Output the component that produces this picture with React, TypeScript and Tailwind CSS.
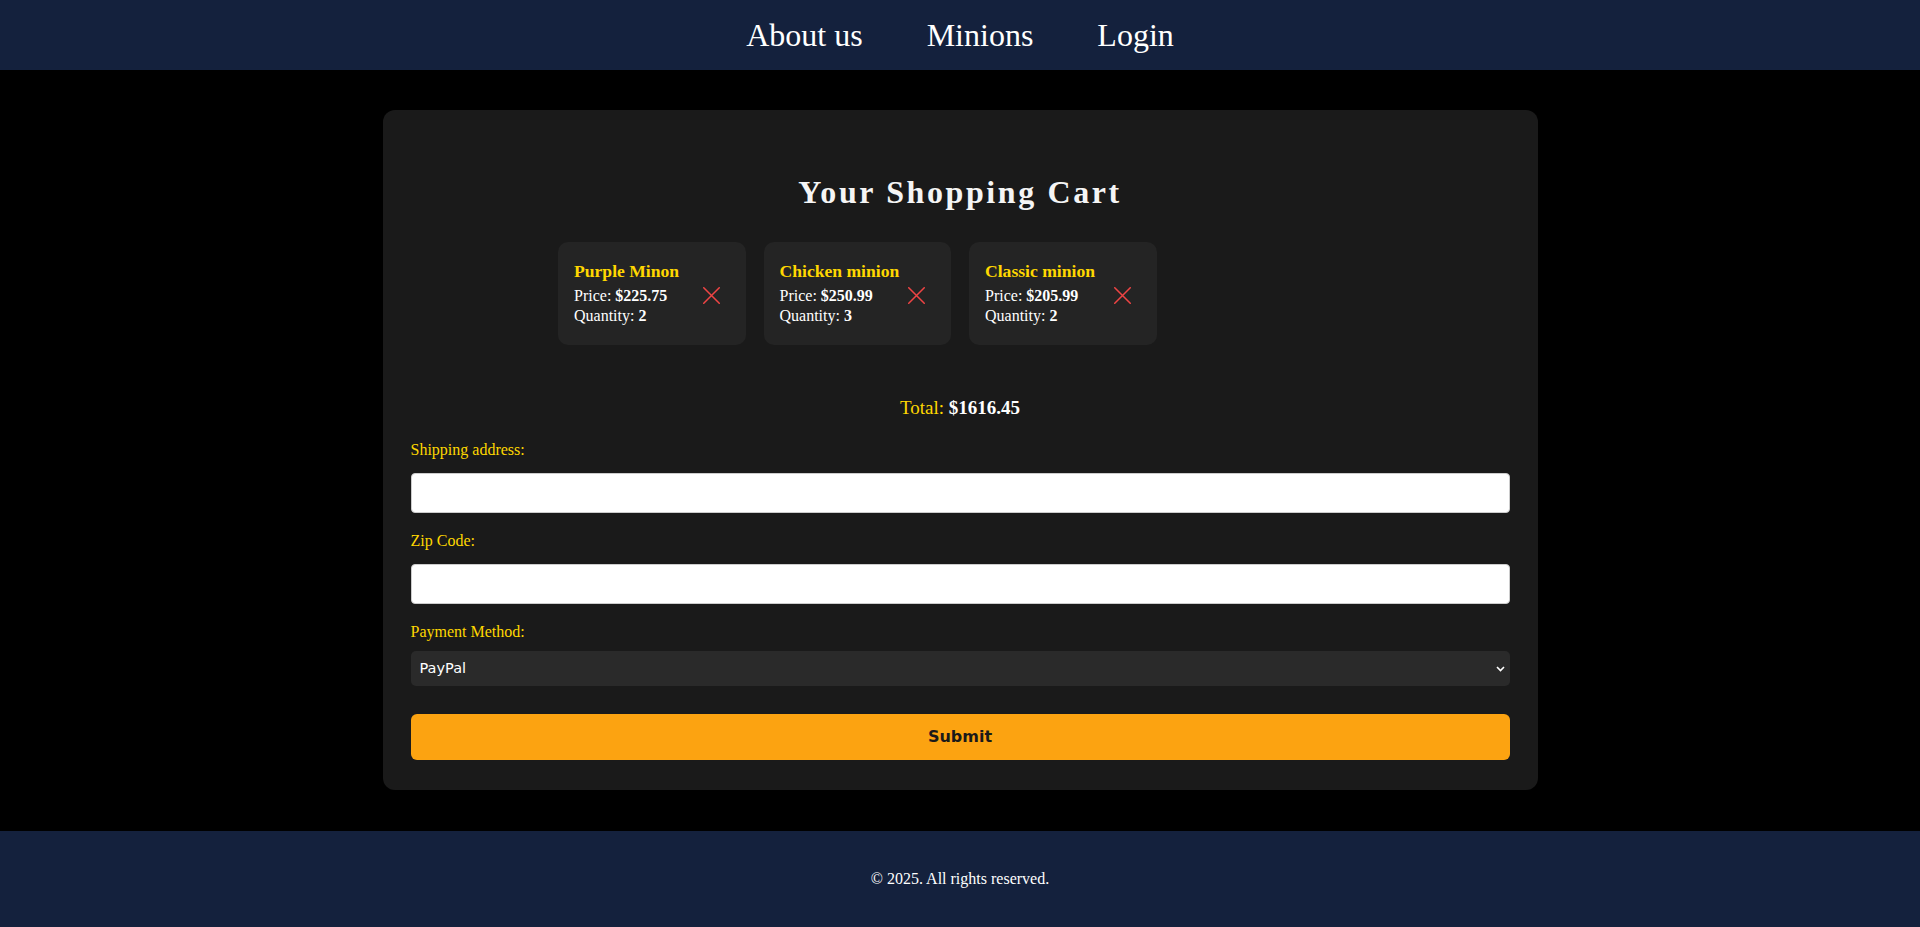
import React from "react";

const items = [
  { name: "Purple Minon", price: "$225.75", qty: 2 },
  { name: "Chicken minion", price: "$250.99", qty: 3 },
  { name: "Classic minion", price: "$205.99", qty: 2 },
];

function XIcon() {
  return (
    <svg width="17" height="17" viewBox="0 0 17 17" fill="none">
      <path d="M0.75 0.75L16.25 16.25M16.25 0.75L0.75 16.25" stroke="#ef4444" strokeWidth="1.5" strokeLinecap="round" />
    </svg>
  );
}

export default function App() {
  return (
    <div className="min-h-screen bg-black flex flex-col font-['Liberation_Serif','Times_New_Roman',serif]">
      <header className="h-[70px] bg-[#14213d] flex items-center justify-center gap-[64px]">
        <a className="text-white text-[32px] leading-[37px]">About us</a>
        <a className="text-white text-[32px] leading-[37px]">Minions</a>
        <a className="text-white text-[32px] leading-[37px]">Login</a>
      </header>

      <main className="flex-1 flex justify-center items-start pt-[40px] pb-[41px]">
        <div className="w-[1155px] bg-[#1a1a1a] rounded-[12px] px-[28px] pt-[64px] pb-[30px]">
          <h2 className="text-center text-[32px] leading-[37px] font-bold tracking-[2.6px] text-[#f5f5f5]">
            Your Shopping Cart
          </h2>

          <div className="mt-[31px] w-[804px] mx-auto grid grid-cols-4 gap-[18px]">
            {items.map((it) => (
              <div key={it.name} className="h-[103px] bg-[#242424] rounded-[10px] flex justify-between items-start pl-4 pr-[26px]">
                <div className="pt-[19px]">
                  <div className="text-[#ffd700] font-bold text-[17.6px] leading-[20px]">{it.name}</div>
                  <div className="mt-[5px] text-white text-[16px] leading-[20px]">
                    Price: <span className="font-bold">{it.price}</span>
                  </div>
                  <div className="text-white text-[16px] leading-[20px]">
                    Quantity: <span className="font-bold">{it.qty}</span>
                  </div>
                </div>
                <button className="self-center mt-[4px] flex">
                  <XIcon />
                </button>
              </div>
            ))}
          </div>

          <div className="mt-[52px] text-center text-[19px] leading-[22px] text-[#ffd700]">
            Total: <span className="font-bold text-white">$1616.45</span>
          </div>

          <div className="mt-[22px]">
            <label className="block text-[16px] leading-[18px] text-[#ffd700]">Shipping address:</label>
            <input className="mt-[14px] block w-full h-[40px] bg-white rounded-[4px] border border-[#cccccc] outline-none" />

            <label className="mt-[19px] block text-[16px] leading-[18px] text-[#ffd700]">Zip Code:</label>
            <input className="mt-[14px] block w-full h-[40px] bg-white rounded-[4px] border border-[#cccccc] outline-none" />

            <label className="mt-[19px] block text-[16px] leading-[18px] text-[#ffd700]">Payment Method:</label>
            <div className="relative mt-[10px]">
              <select className="appearance-none block w-full h-[35px] bg-[#2a2a2a] rounded-[5px] text-white pl-[9px] text-[14.5px] font-['DejaVu_Sans',sans-serif] outline-none">
                <option>PayPal</option>
                <option>Credit Card</option>
              </select>
              <svg className="absolute right-[5px] top-[15px] pointer-events-none" width="9" height="6" viewBox="0 0 9 6" fill="none">
                <path d="M1 1L4.5 4.5L8 1" stroke="#ffffff" strokeWidth="1.6" />
              </svg>
            </div>

            <button className="mt-[28px] block w-full h-[46px] bg-[#fca311] rounded-[6px] font-['DejaVu_Sans',sans-serif] font-bold text-[16px] text-[#1a1a1a]">
              Submit
            </button>
          </div>
        </div>
      </main>

      <footer className="h-[96px] bg-[#14213d] flex items-center justify-center">
        <p className="text-white text-[16px] leading-[18px]">© 2025. All rights reserved.</p>
      </footer>
    </div>
  );
}
